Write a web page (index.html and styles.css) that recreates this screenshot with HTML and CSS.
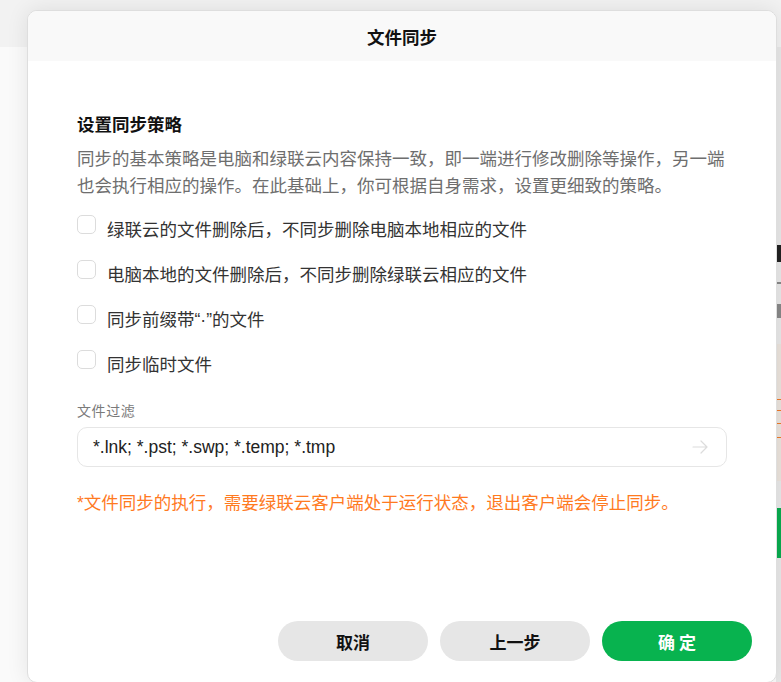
FILE: index.html
```html
<!DOCTYPE html>
<html lang="zh-CN">
<head>
<meta charset="utf-8">
<title>文件同步</title>
<link rel="stylesheet" href="styles.css">
</head>
<body>
<div class="page">
  <div class="topbar"></div>
  <div class="main">
    <div class="side">
      <div class="side-text dark"></div>
      <div class="side-text grey"></div>
      <div class="side-text grey short"></div>
      <div class="side-card">
        <div class="side-tag"></div>
        <div class="side-tag tall"></div>
      </div>
      <div class="side-gap"></div>
      <div class="side-green"></div>
    </div>
  </div>
</div>

<div class="dialog">
  <div class="dialog-header">文件同步</div>
  <div class="dialog-body">
    <h2 class="section-title">设置同步策略</h2>
    <p class="section-desc">同步的基本策略是电脑和绿联云内容保持一致，即一端进行修改删除等操作，另一端也会执行相应的操作。在此基础上，你可根据自身需求，设置更细致的策略。</p>
    <ul class="options">
      <li class="option"><span class="checkbox"></span><span>绿联云的文件删除后，不同步删除电脑本地相应的文件</span></li>
      <li class="option"><span class="checkbox"></span><span>电脑本地的文件删除后，不同步删除绿联云相应的文件</span></li>
      <li class="option"><span class="checkbox"></span><span>同步前缀带“·”的文件</span></li>
      <li class="option"><span class="checkbox"></span><span>同步临时文件</span></li>
    </ul>
    <div class="field-label">文件过滤</div>
    <div class="field">
      <span class="field-value">*.lnk; *.pst; *.swp; *.temp; *.tmp</span>
      <svg class="field-arrow" width="18" height="18" viewBox="0 0 18 18" fill="none" stroke="#dcdcdc" stroke-width="1.2" stroke-linecap="round" stroke-linejoin="round">
        <path d="M2 9h14M10 3l6 6-6 6"/>
      </svg>
    </div>
    <p class="note">*文件同步的执行，需要绿联云客户端处于运行状态，退出客户端会停止同步。</p>
  </div>
  <div class="dialog-footer">
    <button class="btn btn-grey">取消</button>
    <button class="btn btn-grey">上一步</button>
    <button class="btn btn-green">确 定</button>
  </div>
</div>
</body>
</html>
```
FILE: styles.css
```css
* { box-sizing: border-box; }
html, body {
  margin: 0;
  padding: 0;
  width: 781px;
  height: 682px;
  overflow: hidden;
}
body {
  font-family: "Liberation Sans", "Noto Sans CJK SC", sans-serif;
  background: #fafafa;
  position: relative;
}
.page {
  display: flex;
  flex-direction: column;
  height: 682px;
}
.topbar {
  height: 47px;
  background: #f2f2f2;
  flex: none;
}
.main {
  flex: 1;
  display: flex;
  justify-content: flex-end;
}
.side {
  width: 5px;
  background: #e8e8e8;
  display: flex;
  flex-direction: column;
  padding-top: 198px;
}
.side-text {
  height: 4px;
  margin-bottom: 14px;
}
.side-text.dark { background: #222; height: 17px; }
.side-text.grey { background: #888; height: 2px; margin-top: 6px; }
.side-text.short { height: 14px; }
.side-card {
  margin-top: 12px;
  height: 137px;
  background: #ebe3dc;
  display: flex;
  flex-direction: column;
  gap: 12px;
  padding-top: 55px;
}
.side-tag {
  height: 12px;
  border: 1px solid #f07a2a;
  border-right: none;
}
.side-tag.tall { height: 15px; }
.side-gap { height: 27px; background: #e8e8e8; }
.side-green { height: 50px; background: #09ac4f; }

.dialog {
  position: absolute;
  left: 27px;
  top: 10px;
  width: 750px;
  height: 673px;
  background: #fff;
  border: 1px solid #dedede;
  border-radius: 10px;
  box-shadow: 0 0 22px rgba(0, 0, 0, 0.09);
  display: flex;
  flex-direction: column;
  overflow: hidden;
}
.dialog-header {
  height: 50px;
  flex: none;
  background: #f9f9f9;
  display: flex;
  align-items: center;
  justify-content: center;
  font-family: "Noto Sans CJK SC", sans-serif;
  font-size: 17.5px;
  font-weight: 700;
  color: #111;
}
.dialog-body {
  padding: 52px 49px 0 49px;
  display: flex;
  flex-direction: column;
}
.section-title {
  margin: 0;
  font-size: 17.5px;
  line-height: 24px;
  font-weight: 700;
  color: #111;
}
.section-desc {
  margin: 9px 0 0 0;
  font-size: 17.5px;
  line-height: 27px;
  color: #6e6e6e;
}
.options {
  list-style: none;
  margin: 16px 0 0 0;
  padding: 0;
  display: flex;
  flex-direction: column;
  gap: 21px;
}
.option {
  display: flex;
  align-items: center;
  gap: 11px;
  height: 24px;
  font-size: 17.5px;
  color: #333;
}
.checkbox {
  width: 19px;
  height: 19px;
  border: 1px solid #dcdcdc;
  border-radius: 5px;
  background: #fff;
  flex: none;
  margin-bottom: 8px;
}
.field-label {
  margin-top: 26px;
  font-size: 14px;
  line-height: 20px;
  letter-spacing: 0.6px;
  color: #7a7a7a;
}
.field {
  margin-top: 6px;
  height: 40px;
  border: 1px solid #e6e6e6;
  border-radius: 10px;
  display: flex;
  align-items: center;
  justify-content: space-between;
  padding: 0 17px 0 15px;
}
.field-value {
  font-size: 17.5px;
  color: #222;
}
.field-arrow { flex: none; }
.note {
  margin: 24px 0 0 0;
  font-size: 17.5px;
  line-height: 24px;
  color: #ff7a1f;
}
.dialog-footer {
  margin-top: auto;
  display: flex;
  justify-content: flex-end;
  gap: 12px;
  padding: 0 24px 21px 0;
}
.btn {
  width: 150px;
  height: 40px;
  border: none;
  border-radius: 20px;
  font-family: "Noto Sans CJK SC", sans-serif;
  font-size: 17px;
  font-weight: 700;
  cursor: pointer;
}
.btn-grey { background: #e6e6e6; color: #111; }
.btn-green { background: #08b34f; color: #fff; }
```
